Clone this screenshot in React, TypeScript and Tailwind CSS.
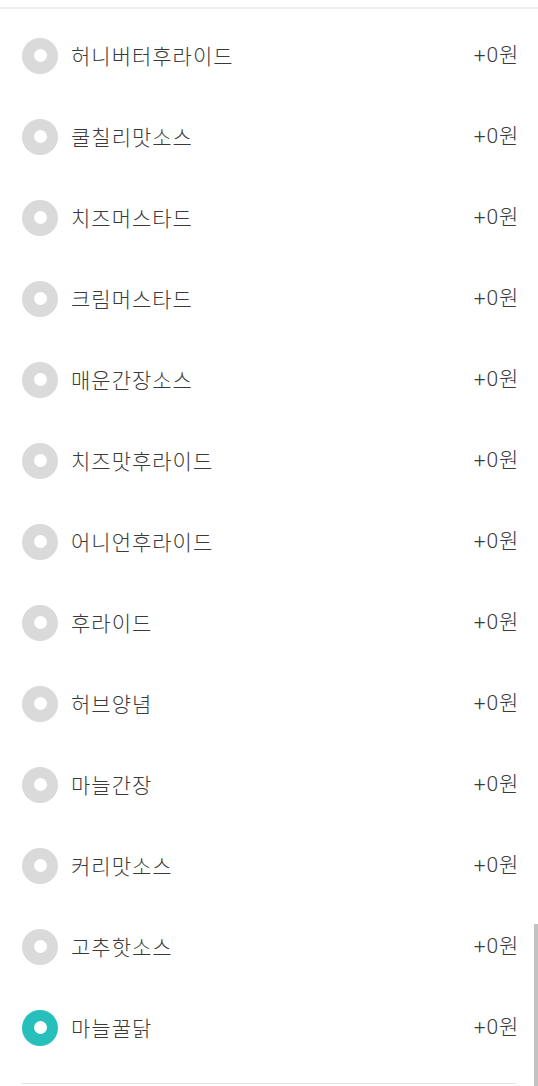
import React from 'react'

const options = [
  { name: '허니버터후라이드', price: '+0원' },
  { name: '쿨칠리맛소스', price: '+0원' },
  { name: '치즈머스타드', price: '+0원' },
  { name: '크림머스타드', price: '+0원' },
  { name: '매운간장소스', price: '+0원' },
  { name: '치즈맛후라이드', price: '+0원' },
  { name: '어니언후라이드', price: '+0원' },
  { name: '후라이드', price: '+0원' },
  { name: '허브양념', price: '+0원' },
  { name: '마늘간장', price: '+0원' },
  { name: '커리맛소스', price: '+0원' },
  { name: '고추핫소스', price: '+0원' },
  { name: '마늘꿀닭', price: '+0원' }
]

function Radio({ checked }: { checked: boolean }) {
  return (
    <div
      className={`w-[36px] h-[36px] rounded-full flex items-center justify-center shrink-0 ${
        checked ? 'bg-[#27bfbc]' : 'bg-[#dadada]'
      }`}
    >
      <div className="w-[13px] h-[13px] rounded-full bg-white" />
    </div>
  )
}

export default function App() {
  const selected = options.length - 1
  return (
    <div
      className="relative w-[538px] h-[1086px] bg-white overflow-hidden text-[#3a3a3a]"
      style={{ fontFamily: '"Noto Sans CJK KR", Roboto, sans-serif' }}
    >
      <div className="h-[7px]" />
      <div className="h-[2px] bg-[#efefef]" />
      <div className="pt-[6px] px-[22px]">
        {options.map((o, i) => (
          <div key={o.name} className="h-[81px] flex items-center">
            <Radio checked={i === selected} />
            <span className="ml-[13px] text-[21px] font-light tracking-[1px]">{o.name}</span>
            <span
              className="ml-auto mr-[-3px] mt-[1px] text-[21px] font-light tracking-[0.8px]"
              style={{ fontFamily: 'Roboto, "Noto Sans CJK KR", sans-serif' }}
            >
              {o.price}
            </span>
          </div>
        ))}
        <div className="mt-[15px] h-px bg-[#e2e2e2]" />
      </div>
      <div className="absolute right-0 top-[924px] w-[4px] h-[162px] bg-[#c2c2c2]" />
    </div>
  )
}
